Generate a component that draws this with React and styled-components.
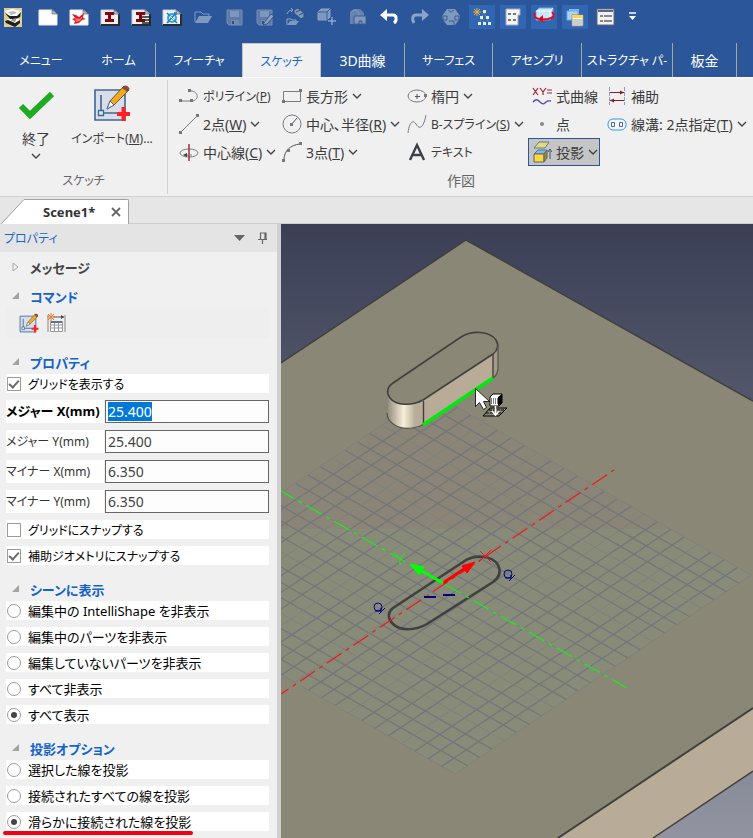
import React, { useEffect, useRef, useState } from 'react';
import styled, { createGlobalStyle, css } from 'styled-components';

const GlobalStyle = createGlobalStyle`
  * { box-sizing: border-box; }
  body {
    margin: 0;
    background: #f0f0f0;
    overflow: hidden;
  }
  body, button, input {
    font-family: 'Noto Sans', 'Noto Sans CJK JP', sans-serif;
    font-size: 13px;
    font-feature-settings: 'palt';
  }
  button {
    margin: 0;
    padding: 0;
    border: none;
    background: none;
    color: inherit;
    cursor: pointer;
  }
  svg { display: block; flex: none; }
`;

const Window = styled.div`
  min-height: 100vh;
  display: flex;
  flex-direction: column;
`;

const TitleBar = styled.header`
  background: #2b579a;
  height: 43px;
  padding-top: 5px;
  display: flex;
  gap: 5px;
`;

const QuickButton = styled.button`
  width: 26px;
  height: 24px;
  flex: none;
  display: flex;
  align-items: center;
  justify-content: center;
  background: ${({ $on }) => ($on ? '#3066b4' : 'transparent')};
  opacity: ${({ $dim }) => ($dim ? 0.46 : 1)};
  &:first-child { margin-right: 4px; }
`;

const TabBar = styled.nav`
  background: #2b579a;
  height: 34px;
  display: flex;
`;

const Tab = styled.button`
  width: ${({ $width }) => $width}px;
  flex: none;
  white-space: nowrap;
  font-size: ${({ $kana }) => ($kana ? 12 : 14)}px;
  color: #fff;
  border-right: ${({ $line }) => ($line ? '1px solid #a5a5a5' : 'none')};
  ${({ $active }) => $active && css`
    background: #f0f0f0;
    color: #1a66cc;
    border: 1px solid #c4c4c4;
    border-bottom: none;
  `}
`;

const Ribbon = styled.section`
  height: 120px;
  padding-top: 2px;
  background: #f0f0f0;
  border-top: 1px solid #fafafa;
  border-bottom: 1px solid #d2d2d2;
  display: flex;
  color: #3c3c3c;
`;

const Group = styled.div`
  display: flex;
  flex-direction: column;
  flex: ${({ $width }) => ($width ? `0 0 ${$width}px` : '1 0 auto')};
  height: 114px;
  border-right: ${({ $width }) => ($width ? '1px solid #d0d0d0' : 'none')};
`;

const GroupLabel = styled.div`
  width: ${({ $wide }) => ($wide ? '586px' : 'auto')};
  margin-top: auto;
  padding-bottom: 3px;
  line-height: 20px;
  text-align: center;
  font-size: ${({ $kana }) => ($kana ? 12 : 14)}px;
  color: #666;
`;

const BigButtons = styled.div`
  display: flex;
`;

const BigButton = styled.button`
  width: ${({ $width }) => $width}px;
  padding-top: 4px;
  display: flex;
  flex-direction: column;
  align-items: center;
  gap: 5px;
  font-size: ${({ $kana }) => ($kana ? 12 : 14)}px;
  line-height: 18px;
  white-space: nowrap;
  svg:first-child { margin-bottom: 3px; }
`;

const ToolGrid = styled.div`
  display: grid;
  grid-template-columns: 103px 125px 125px 75px max-content;
  grid-auto-rows: 28px;
  padding: 2px 0 0 7px;
`;

const Tool = styled.button`
  height: 28px;
  padding-left: 4px;
  display: flex;
  align-items: center;
  gap: 4px;
  font-size: ${({ $kana }) => ($kana ? 12 : 14)}px;
  white-space: nowrap;
  ${({ $pressed }) => $pressed && css`
    width: 72px;
    padding-left: 3px;
    background: #c5c5c5;
    border: 1px solid #2b579a;
  `}
`;

const DocTabs = styled.div`
  height: 27px;
  padding: 2px 0 0 2px;
  background: #e6e6e6;
  border-bottom: 1px solid #cfcfcf;
  display: flex;
`;

const DocTab = styled.div`
  width: 105px;
  height: 25px;
  padding: 0 7px 0 19px;
  background: #fff;
  border-top: 1px solid #a0a0a0;
  border-right: 1px solid #a0a0a0;
  border-radius: 0 2px 0 0;
  display: flex;
  align-items: center;
  justify-content: space-between;
  font-weight: 700;
  color: #333;
`;

const Workspace = styled.main`
  flex: 1;
  display: flex;
`;

const Panel = styled.aside`
  width: 281px;
  flex: none;
  background: #f0f0f0;
  border-right: 4px solid #d0d0d0;
`;

const PanelHeader = styled.div`
  height: 28px;
  padding: 0 9px 0 4px;
  background: #e4e4e4;
  display: flex;
  align-items: center;
  gap: 12px;
  color: #1a66cc;
`;

const PanelTitle = styled.span`
  flex: 1;
  font-size: 12px;
`;

const PanelBody = styled.div`
  padding: 3px 8px 0 6px;
`;

const Heading = styled.h2`
  height: 24px;
  margin: ${({ $gap }) => $gap}px 0 0;
  padding-left: 6px;
  display: flex;
  align-items: center;
  gap: 10px;
  font-size: 13px;
  font-weight: 700;
  color: ${({ $plain }) => ($plain ? '#444' : '#1463c9')};
`;

const CommandStrip = styled.div`
  height: 30px;
  padding-left: 13px;
  background: #eee;
  display: flex;
  align-items: center;
  gap: 7px;
`;

const Stack = styled.div`
  display: flex;
  flex-direction: column;
  gap: 7px;
`;

const Choice = styled.label`
  height: 19px;
  padding-left: 1px;
  background: #fff;
  display: flex;
  align-items: center;
  gap: 7px;
  font-size: ${({ $kana }) => ($kana ? 12 : 13)}px;
  white-space: nowrap;
  color: #000;
`;

const Check = styled.input`
  appearance: none;
  width: 14px;
  height: 14px;
  margin: 0;
  flex: none;
  border: 1px solid #9b9b9b;
  background: #fff;
  display: grid;
  place-items: center;
  &:checked::after {
    content: '';
    width: 4px;
    height: 8px;
    margin-bottom: 2px;
    border: solid #6a6a6a;
    border-width: 0 2px 2px 0;
    transform: rotate(42deg);
  }
`;

const Radio = styled(Check)`
  border-radius: 50%;
  &:checked::after {
    width: 6px;
    height: 6px;
    margin: 0;
    border: none;
    border-radius: 50%;
    background: #444;
    transform: none;
  }
`;

const Field = styled.label`
  height: 23px;
  display: flex;
  gap: 1px;
  font-size: ${({ $bold }) => ($bold ? 13 : 12)}px;
  font-weight: ${({ $bold }) => ($bold ? 700 : 400)};
  color: ${({ $bold }) => ($bold ? '#000' : '#333')};
`;

const FieldName = styled.span`
  width: 98px;
  background: #fff;
  line-height: 23px;
  white-space: nowrap;
`;

const FieldInput = styled.input`
  flex: 1;
  min-width: 0;
  padding: 0 2px;
  border: 1px solid #666;
  border-radius: 0;
  background: #fdfdfd;
  font-size: 14px;
  color: #444;
  outline: none;
  &::selection { background: #0078d7; color: #fff; }
`;

const Marker = styled.div`
  width: 190px;
  height: 4px;
  margin-left: -3px;
  border-radius: 2px;
  background: #f40010;
`;

const Viewport = styled.div`
  flex: 1;
  min-width: 0;
  position: relative;
  overflow: hidden;
  background: #8a8776;
`;

const SceneSvg = styled.svg`
  position: absolute;
  inset: 0;
  width: 100%;
  height: 100%;
`;

const Icon = ({ w = 20, h = 20, children }) => (
  <svg width={w} height={h} viewBox={`0 0 ${w} ${h}`} fill="none" aria-hidden="true">{children}</svg>
);

const Chevron = () => (
  <Icon w={10} h={6}><path d="M1 1l4 4 4-4" stroke="#444" strokeWidth="1.4" /></Icon>
);

const Page = ({ dark, children }) => (
  <Icon w={20} h={18}>
    <path d="M1 2h13l5 4v11H1z" fill={dark ? '#eef0f2' : '#fff'} stroke={dark ? '#c9cdd4' : '#e8ecf2'} />
    {dark && <path d="M1 17h18V6" stroke="#2b2b30" strokeWidth="2" />}
    <path d="M14 2v4h5z" fill="#bcc6d4" stroke="#555" strokeWidth=".6" />
    {children}
  </Icon>
);

const floppy = (
  <>
    <path d="M2 2h15v15H4l-2-2z" fill="#9aa7b8" stroke="#c9d0da" />
    <path d="M5 3h9v6H5z" fill="#dde3ea" />
    <path d="M6 12h8v5H6z" fill="#c2cad4" />
    <path d="M7 13h2v3H7z" fill="#445" />
  </>
);

const quickItems = [
  { name: 'アプリケーション', icon: (
    <Icon w={18} h={19}>
      <path d="M0 0h18v19H0z" fill="#d9cf96" />
      <path d="M1 3l7-2 9 2v3l-4 4 4 3-6 5-9-5 4-3z" fill="#fff" />
      <path d="M1 5l5 3h7l4-4-1 5-4 2H6z" fill="#1f1f1c" />
      <path d="M1 13l3-1 7 3 5-3v3l-5 4-9-4z" fill="#1f1f1c" />
      <path d="M4 4l6-1 3 2-6 2z" fill="#bbb" /><path d="M8 11l5-1-2 4-4-1z" fill="#999" />
    </Icon>
  ) },
  { name: '新規', icon: <Page /> },
  { name: '新規シーン', icon: (
    <Page>
      <path d="M3 6l4 1 3 2 5-4-1 5 3 1-4 1-3 3-5 1 1-3-3-2 3-1z" fill="#d8202b" />
      <path d="M6 10l4 1 4-3-3 5-4 1z" fill="#ff6b70" />
    </Page>
  ) },
  { name: '新規図面', icon: <Page dark><path d="M5 4h9v3h-3v4h3v3H5v-3h3V7H5z" fill="#8b0009" /></Page> },
  { name: '図面一覧', icon: (
    <Page dark>
      <path d="M5 4h9v3h-3v4h3v3H5v-3h3V7H5z" fill="#8b0009" />
      <path d="M11 9h9M9 12h10M11 15h9" stroke="#222" strokeWidth="1.4" />
    </Page>
  ) },
  { name: '新規CAXA', icon: (
    <Page dark>
      <circle cx="10" cy="10" r="4" stroke="#35a7e0" strokeWidth="2" />
      <path d="M5 5l10 10M14 5l-9 10M12 5h2v2M6 15v-2" stroke="#1c7fc2" strokeWidth="1.5" />
      <path d="M8 8l4 4" stroke="#d9f2ff" />
    </Page>
  ) },
  { name: '開く', dim: true, icon: (
    <Icon w={20} h={18}>
      <path d="M2 14V4h6l2 2h6v3" stroke="#dfe6ef" /><path d="M2 15l4-7h13l-4 7z" fill="#dfe6ef" />
    </Icon>
  ) },
  { name: '保存', dim: true, icon: <Icon w={19} h={19}>{floppy}</Icon> },
  { name: '名前を付けて保存', dim: true, icon: (
    <Icon w={20} h={19}>{floppy}<path d="M9 15l7-9 3 2-7 8-4 1z" fill="#fff" stroke="#456" /></Icon>
  ) },
  { name: 'カタログから開く', dim: true, icon: (
    <Icon w={22} h={20}>
      <path d="M2 7c1-3 3-4 6-4M6 1l2 2-2 2" stroke="#fff" />
      <path d="M9 3l4-2 6 5v4l-3 2-7-6z" fill="#e3e8ef" stroke="#345" />
      <path d="M11 5l4-2M14 8l4-2" stroke="#345" />
      <path d="M2 18v-6h4l1 1h4v2" stroke="#fff" /><path d="M2 18l3-4h9l-3 4z" fill="#dfe6ef" />
    </Icon>
  ) },
  { name: 'パーツ挿入', dim: true, icon: (
    <Icon w={20} h={20}>
      <path d="M1 5l3-3h9v8l-3 3H1z" fill="#dfe6ef" stroke="#fff" /><path d="M1 5h9v8M10 5l3-3" stroke="#567" />
      <path d="M15 10v8M11 14h8" stroke="#fff" strokeWidth="1.5" />
    </Icon>
  ) },
  { name: 'パッケージ', dim: true, icon: (
    <Icon w={20} h={20}>
      <path d="M2 17V5l4-3h6l4 4v11z" fill="#aebacb" /><path d="M3 5c5-4 8-1 8 4" stroke="#dfe6ef" />
      <path d="M6 9h12v8h-4v-3h-3v3H6z" fill="#dfe6ef" stroke="#567" />
    </Icon>
  ) },
  { name: '元に戻す', icon: (
    <Icon w={20} h={18}>
      <path d="M3 7h11c4 0 4 6 1 8" stroke="#fff" strokeWidth="3" /><path d="M8 1L1 7l7 6z" fill="#fff" />
    </Icon>
  ) },
  { name: 'やり直し', dim: true, icon: (
    <Icon w={20} h={18}>
      <path d="M17 7H6C2 7 2 12 4 15" stroke="#fff" strokeWidth="3" /><path d="M12 1l7 6-7 6z" fill="#fff" />
    </Icon>
  ) },
  { name: '表示', dim: true, icon: (
    <Icon w={20} h={20}>
      <path d="M6 2h8l5 7-1 4-4 5H6l-4-5-1-4z" fill="#dfe6ef" />
      <path d="M6 9H2v4h4zM14 9h4v4h-4zM7 3l3 2 3-2M8 14h5v4" stroke="#567" />
    </Icon>
  ) },
  { name: 'シーンツリー', on: true, icon: (
    <Icon w={20} h={20}>
      <path d="M5 1v8M1 5h8M2 2l6 6M8 2L2 8" stroke="#f3b431" />
      <path d="M12 4l-2 6-2 6M12 4l2 6 3 6M10 10l2 6" stroke="#70a7d8" strokeDasharray="1 1" />
      <path d="M11 3h3v3h-3zM8 9h3v3H8zM14 9h3v3h-3zM6 15h3v3H6zM11 15h3v3h-3zM16 15h3v3h-3z" fill="#e6f3d2" />
    </Icon>
  ) },
  { name: 'プロパティブラウザ', on: true, icon: (
    <Icon w={18} h={18}>
      <path d="M2 1h14v6h-2v10H2z" fill="#f5f5f5" stroke="#aaa" />
      <path d="M4 6h3M9 6h3M4 12h3M9 12h3" stroke="#777" strokeWidth="2" />
    </Icon>
  ) },
  { name: '回転', on: true, icon: (
    <Icon w={22} h={20}>
      <path d="M3 4l3-3h14v9l-3 3H3z" fill="#c9e6fa" stroke="#6aa8d8" /><path d="M3 4h14v9M17 4l3-3" stroke="#eef9ff" />
      <path d="M2 6c-3 6 6 7 13 6 6-1 7-4 4-7" stroke="#e30a1c" strokeWidth="2" /><path d="M10 8l-5 4 5 4z" fill="#e30a1c" />
    </Icon>
  ) },
  { name: 'カタログ', on: true, icon: (
    <Icon w={20} h={20}>
      <path d="M4 2h10v9H4z" fill="#87bce8" /><path d="M2 4h11v9H2z" fill="#a9d3f3" stroke="#74a9d5" />
      <path d="M7 8h11v11H7z" fill="#fff" stroke="#888" /><path d="M7 8h11v3H7z" fill="#ffd447" />
      <path d="M8 13h9M8 15h9M8 17h9" stroke="#999" />
    </Icon>
  ) },
  { name: 'オプション', icon: (
    <Icon w={20} h={18}>
      <path d="M1 1h17v16H1z" fill="#f2f2f2" stroke="#667" /><path d="M2 3h15" stroke="#536a8b" strokeWidth="2" />
      <path d="M4 8h3M4 13h3M8 8h8M8 13h8" stroke="#666" strokeWidth="1.5" />
    </Icon>
  ) },
  { name: 'カスタマイズ', icon: <Icon w={20} h={10}><path d="M2 1h7" stroke="#fff" strokeWidth="1.5" /><path d="M2 4h7L5.500 8z" fill="#fff" /></Icon> },
];

const tabs = [
  { label: 'メニュー', width: 82, kana: true },
  { label: 'ホーム', width: 74, kana: true, line: true },
  { label: 'フィーチャ', width: 86, kana: true },
  { label: 'スケッチ', width: 79, kana: true, active: true },
  { label: '3D曲線', width: 84, line: true },
  { label: 'サーフェス', width: 88, kana: true, line: true },
  { label: 'アセンブリ', width: 89, kana: true, line: true },
  { label: 'ストラクチャ パ-', width: 91, kana: true, line: true },
  { label: '板金', width: 64, line: true },
];

const SketchIcon = ({ size }) => (
  <svg width={size} height={size} viewBox="0 0 38 38" fill="none" aria-hidden="true">
    <path d="M2 6h30v30H2z" fill="#d9dde7" stroke="#3e6796" strokeWidth="1.600" />
    <path d="M8 11v18h20" stroke="#3e6796" strokeWidth="1.600" />
    <path d="M5.500 26.500h5v5h-5z" fill="#d9eafa" stroke="#3e6796" strokeWidth="1.300" />
    <path d="M14 25l3-8 14-15 5 4-15 15z" fill="#f8aa12" stroke="#5b5b58" />
    <path d="M14 25l3-8 4 4z" fill="#fff" stroke="#496583" />
    <path d="M29 4l2-2c2-2 7 2 5 4l-2 2z" fill="#8f4b3a" />
    <path d="M30.500 23v14M24 30h13" stroke="#f22" strokeWidth="4" />
  </svg>
);

const line = { stroke: '#777b82', strokeWidth: 1 };
const Dot = ({ x, y }) => <path d={`M${x - 1} ${y - 1}h3v3h-3z`} fill="#777" />;

const toolRows = [
  [
    { label: 'ポリライン', accel: 'P', kana: true, icon: <Icon><path d="M1 15h12c8-1 6-10-1-10" {...line} /><Dot x={1} y={14} /><Dot x={12} y={14} /><Dot x={10} y={4} /></Icon> },
    { label: '長方形', menu: true, icon: <Icon><path d="M1.500 5.500h17v10h-17z" {...line} /><Dot x={1} y={15} /><Dot x={18} y={4} /></Icon> },
    { label: '楕円', menu: true, icon: <Icon><ellipse cx="10" cy="10" rx="9" ry="6" {...line} /><path d="M10 8v5M8 10.500h5" stroke="#555" /><Dot x={18} y={9} /></Icon> },
    { label: '式曲線', icon: (
      <Icon>
        <path d="M1 2l5 7M6 2l-5 7M8 2l3 4 3-4M11 6v3M15 4h5M15 7h5" stroke="#a52538" strokeWidth="1.200" />
        <path d="M1 16c3-3 4-3 7 0s4 2 6 0 3-1 5-1" stroke="#5546c4" strokeWidth="1.300" />
      </Icon>
    ) },
    { label: '補助', icon: (
      <Icon>
        <path d="M2.500 1v18M17.500 1v18" stroke="#8a9cc8" strokeDasharray="4 1" />
        <path d="M3 6.500h14M3 14.500h14" stroke="#7d1e28" /><path d="M17 6.500l-4-2v4zM3 14.500l4-2v4z" fill="#8a1a22" />
      </Icon>
    ) },
  ],
  [
    { label: '2点', accel: 'W', menu: true, icon: <Icon><path d="M2 18L18 2" {...line} /><Dot x={1} y={18} /><Dot x={18} y={1} /></Icon> },
    { label: '中心、半径', accel: 'R', menu: true, icon: <Icon><circle cx="10" cy="10" r="9" {...line} /><path d="M9 11l6-7" stroke="#555" /><Dot x={9} y={10} /></Icon> },
    { label: 'B-スプライン', accel: 'S', menu: true, kana: true, icon: <Icon><path d="M1 19c1-10 5-14 8-9s7 6 10-9" {...line} /></Icon> },
    { label: '点', icon: <Icon><circle cx="10" cy="10" r="2" fill="#888" /></Icon> },
    { label: '線溝: 2点指定', accel: 'T', menu: true, icon: (
      <Icon><rect x="1" y="5" width="18" height="11" rx="5" fill="#edf7ff" stroke="#3b96e8" /><path d="M4.500 8.500h3v4h-3zM12.500 8.500h3v4h-3z" stroke="#666" /></Icon>
    ) },
  ],
  [
    { label: '中心線', accel: 'C', menu: true, icon: <Icon><ellipse cx="10" cy="11" rx="9" ry="4" {...line} /><path d="M10 2v17" stroke="#a2313c" strokeWidth="1.500" /><path d="M5 13h8" {...line} /><path d="M8 11l-4 2 4 2z" fill="#444" /></Icon> },
    { label: '3点', accel: 'T', menu: true, icon: <Icon><path d="M2 18C2 9 8 3 18 2" stroke="#555" /><Dot x={1} y={18} /><Dot x={6} y={8} /><Dot x={18} y={1} /></Icon> },
    { label: 'テキスト', kana: true, icon: <Icon><path d="M3 18L10 3l7 15M5.500 13h9" stroke="#3a414b" strokeWidth="2.400" /></Icon> },
    { label: '投影', menu: true, pressed: true, icon: (
      <Icon w={20} h={22}>
        <path d="M2 7l5-6h10l-4 6z" fill="#e2dc7c" stroke="#5b7c95" /><path d="M2 13l4-4h9l-3 4z" fill="#88b8e4" stroke="#4f7391" />
        <path d="M2 13h10v8H2z" fill="#ffd83c" stroke="#5b6870" /><path d="M12 13l3-4v8l-3 4z" fill="#a6872e" stroke="#5b6870" />
        <path d="M18 18V9M16 11l2-3 2 3" stroke="#375a83" />
      </Icon>
    ) },
  ],
];

const commandIcons = [
  { name: 'インポート', icon: <SketchIcon size={20} /> },
  { name: 'パラメータ表', icon: (
    <Icon>
      <path d="M2 2v17M19 2v17" stroke="#888" /><path d="M7 4h11" stroke="#555" /><path d="M18 4l-3-2v4z" fill="#444" />
      <path d="M4.500 8.500h12v10h-12zM4.500 12h12M4.500 15h12M8.500 9v9M12.500 9v9" fill="#fff" stroke="#999" />
      <path d="M5 8h11v2H5z" fill="#63728a" />
      <path d="M5 0v8M1 4h8M2 1l6 6M8 1L2 7" stroke="#e9792a" />
    </Icon>
  ) },
];

const fields = [
  { label: 'メジャー X(mm)', value: '25.400' },
  { label: 'メジャー Y(mm)', value: '25.400' },
  { label: 'マイナー X(mm)', value: '6.350' },
  { label: 'マイナー Y(mm)', value: '6.350' },
];

const sceneOptions = [
  '編集中の IntelliShape を非表示',
  '編集中のパーツを非表示',
  '編集していないパーツを非表示',
  'すべて非表示',
  'すべて表示',
];

const projectionOptions = [
  '選択した線を投影',
  '接続されたすべての線を投影',
  '滑らかに接続された線を投影',
];

function Section({ title, gap, plain, children }) {
  return (
    <>
      <Heading $gap={gap} $plain={plain}>
        <Icon w={8} h={10}>
          {plain
            ? <path d="M1 1v8l5-4z" stroke="#aaa" />
            : <path d="M0 8h7V1z" fill="#a3a3a3" />}
        </Icon>
        {title}
      </Heading>
      {children}
    </>
  );
}

function RadioGroup({ name, options, initial }) {
  const [value, setValue] = useState(initial);
  return (
    <Stack role="radiogroup">
      {options.map((option) => (
        <Choice key={option}>
          <Radio type="radio" name={name} checked={value === option} onChange={() => setValue(option)} />
          {option}
        </Choice>
      ))}
    </Stack>
  );
}

// Sketch plane: the near corner and its two edge vectors, 24 cells each way
const CELLS = 24;
const corner = { x: 455, y: 774 };
const edgeU = { x: 296, y: -199 };
const edgeV = { x: -320, y: -183 };

const planePoint = (u, v) => [
  corner.x + edgeU.x * u + edgeV.x * v,
  corner.y + edgeU.y * u + edgeV.y * v,
];

const gridLines = Array.from({ length: CELLS + 1 }, (_, i) => {
  const t = i / CELLS;
  return {
    major: i % 4 === 0,
    d: `M${planePoint(t, 0)}L${planePoint(t, 1)}M${planePoint(0, t)}L${planePoint(1, t)}`,
  };
});

const planeOutline = [planePoint(0, 0), planePoint(1, 0), planePoint(1, 1), planePoint(0, 1)].join(' ');

function Scene() {
  return (
    <SceneSvg viewBox="281 224 472 614" preserveAspectRatio="xMinYMin slice" fill="none">
      <defs>
        <linearGradient id="sky" x1="0" y1="0" x2="0" y2="1">
          <stop offset="0" stopColor="#3a3f56" />
          <stop offset="1" stopColor="#9194a0" />
        </linearGradient>
        <linearGradient id="round" x1="387" y1="0" x2="424" y2="0" gradientUnits="userSpaceOnUse">
          <stop offset="0" stopColor="#8f8878" />
          <stop offset=".45" stopColor="#f7efd9" />
          <stop offset=".75" stopColor="#b9ae99" />
          <stop offset="1" stopColor="#b8ab97" />
        </linearGradient>
        <clipPath id="nearHalf"><path d="M281 529h472v309H281z" /></clipPath>
      </defs>
      <path d="M281 224h472v614H281z" fill="url(#sky)" />
      <path d="M281 363L466 240L753 401V708L558 838H281z" fill="#8a8776" />
      <path d="M558 838L753 708V771L653 838z" fill="#b8ab97" />
      <path d="M281 363L466 240L753 401M653 838L753 771" stroke="#404040" strokeWidth="1.500" />
      <path d="M558 838L753 708" stroke="#404040" strokeWidth="2" />

      <polygon points={planeOutline} fill="#8a8576" />
      <polygon points={planeOutline} fill="#888b78" clipPath="url(#nearHalf)" />
      {gridLines.map(({ major, d }) => (
        <path key={d} d={d} stroke={major ? '#7f807d' : '#74767c'} strokeWidth={major ? 1 : 1.3} />
      ))}

      <path d="M388 391v25c0 8 12 14 24 12 5 0 8-1 12-4v-24z" fill="url(#round)" />
      <path d="M423 400L493 354V378L424 425z" fill="#b8ab97" />
      <path d="M493 354l5-9v24l-5 9z" fill="#a59a88" />
      <path d="M393 383L461 337C472 330 490 331 496 340C499 345 498 350 493 354L423 400C412 406 396 406 390 398C386 393 387 387 393 383z" fill="#8a8776" stroke="#404040" strokeWidth="1.600" />
      <path d="M387 413c0 10 12 17 25 15 5-1 8-1 12-4M498 345v23c0 5-2 8-5 10" stroke="#55534d" strokeWidth="1.200" />
      <path d="M423.500 401v23M493 354v24" stroke="#404040" strokeWidth="1.400" />
      <path d="M423 425L493 378" stroke="#00e80c" strokeWidth="3.500" />

      <path d="M393 608L463 562C474 554 492 555 498 565C501 571 500 577 493 582L427 624C415 631 400 631 393 624C387 618 388 612 393 608z" stroke="#404040" strokeWidth="2.600" />
      <path d="M281 694L614 470" stroke="#f01818" strokeWidth="1.200" strokeDasharray="18 5 4 5" strokeDashoffset="9" />
      <path d="M281 491L627 688" stroke="#18f018" strokeWidth="1.200" strokeDasharray="18 5 4 5" strokeDashoffset="3" />
      <path d="M443 583L467 567" stroke="#f00" strokeWidth="3" />
      <path d="M475 562l-8 11-5-7z" fill="#f00" stroke="#f00" />
      <path d="M443 583L420 570" stroke="#0f0" strokeWidth="3" />
      <path d="M410 564l14 3-5 8z" fill="#0f0" stroke="#0f0" />
      <path d="M480 551l11 11M491 550l-12 12" stroke="#f01818" />
      <path d="M395 553l5 6 5-6M400 559v6" stroke="#18f018" />
      <g stroke="#000080">
        <path d="M424 597h12M443 595h12" strokeWidth="2" />
        <circle cx="378" cy="607" r="4" /><path d="M375 611h6M379 614l6-6M381 608v4" />
        <circle cx="508" cy="574" r="4" /><path d="M505 578h6M509 581l6-6M511 575v4" />
      </g>

      <path d="M475.500 388.500v18l4-4 4 7 3-2-3-6h6z" fill="#fff" stroke="#000" strokeWidth=".8" />
      <path d="M490 397l3-3h9v9l-3 3h-9z" fill="#fff" stroke="#000" />
      <path d="M498 397l4-3v9l-4 3z" fill="#000" />
      <path d="M491 399h7M491 401h7M491 403h7" stroke="#000" strokeDasharray="1 1" />
      <path d="M483 416l7-8h17l-8 8z" fill="#8a8776" stroke="#000" />
      <path d="M486 413h16M489 410h16" stroke="#000" strokeDasharray="3 1" />
      <path d="M495.500 406v8M492 411l3.500 4 3.500-4" stroke="#fff" strokeWidth="1.500" />
    </SceneSvg>
  );
}

export default function App() {
  const [values, setValues] = useState(fields.map((f) => f.value));
  const [showGrid, setShowGrid] = useState(true);
  const [snapGrid, setSnapGrid] = useState(false);
  const [snapGeometry, setSnapGeometry] = useState(true);
  const firstField = useRef(null);

  useEffect(() => {
    firstField.current.focus();
    firstField.current.select();
  }, []);

  const setField = (index, value) => {
    setValues(values.map((v, i) => (i === index ? value : v)));
  };

  return (
    <Window>
      <GlobalStyle />
      <TitleBar>
        {quickItems.map(({ name, icon, on, dim }) => (
          <QuickButton key={name} aria-label={name} $on={on} $dim={dim}>{icon}</QuickButton>
        ))}
      </TitleBar>
      <TabBar>
        {tabs.map((t) => (
          <Tab key={t.label} $width={t.width} $line={t.line} $kana={t.kana} $active={t.active}>{t.label}</Tab>
        ))}
      </TabBar>

      <Ribbon>
        <Group $width={168}>
          <BigButtons>
            <BigButton $width={72}>
              <Icon w={36} h={38}><path d="M3 22l9 9L34 10" stroke="#1eab22" strokeWidth="6" /></Icon>
              終了
              <Chevron />
            </BigButton>
            <BigButton $width={80} $kana>
              <SketchIcon size={38} />
              <span>インポート(<u>M</u>)...</span>
            </BigButton>
          </BigButtons>
          <GroupLabel $kana>スケッチ</GroupLabel>
        </Group>
        <Group>
          <ToolGrid>
            {toolRows.flat().map(({ label, accel, menu, kana, pressed, icon }) => (
              <Tool key={label} $kana={kana} $pressed={pressed}>
                {icon}
                <span>{label}{accel && <>(<u>{accel}</u>)</>}</span>
                {menu && <Chevron />}
              </Tool>
            ))}
          </ToolGrid>
          <GroupLabel $wide>作図</GroupLabel>
        </Group>
      </Ribbon>

      <DocTabs>
        <Icon w={22} h={25}><path d="M0 25L22 0v25z" fill="#fff" /><path d="M0 24L22 .5" stroke="#a0a0a0" /></Icon>
        <DocTab>
          Scene1*
          <button aria-label="閉じる"><Icon w={10} h={10}><path d="M1 1l8 8M9 1L1 9" stroke="#666" strokeWidth="1.800" /></Icon></button>
        </DocTab>
      </DocTabs>

      <Workspace>
        <Panel>
          <PanelHeader>
            <PanelTitle>プロパティ</PanelTitle>
            <button aria-label="メニュー"><Icon w={12} h={6}><path d="M0 0h11L5.500 6z" fill="#666" /></Icon></button>
            <button aria-label="固定"><Icon w={10} h={12}><path d="M2 1h6v6M2.500 1v6M7 1v6M0 7.500h9M4.500 8v4" stroke="#666" strokeWidth="1.200" /></Icon></button>
          </PanelHeader>
          <PanelBody>
            <Section title="メッセージ" gap={0} plain />
            <Section title="コマンド" gap={5}>
              <CommandStrip>
                {commandIcons.map(({ name, icon }) => <button key={name} aria-label={name}>{icon}</button>)}
              </CommandStrip>
            </Section>
            <Section title="プロパティ" gap={12}>
              <Stack>
                <Choice $kana>
                  <Check type="checkbox" checked={showGrid} onChange={(e) => setShowGrid(e.target.checked)} />
                  グリッドを表示する
                </Choice>
                {fields.map((f, i) => (
                  <Field key={f.label} $bold={i === 0}>
                    <FieldName>{f.label}</FieldName>
                    <FieldInput
                      type="text"
                      ref={i === 0 ? firstField : null}
                      value={values[i]}
                      onChange={(e) => setField(i, e.target.value)}
                    />
                  </Field>
                ))}
                <Choice $kana>
                  <Check type="checkbox" checked={snapGrid} onChange={(e) => setSnapGrid(e.target.checked)} />
                  グリッドにスナップする
                </Choice>
                <Choice $kana>
                  <Check type="checkbox" checked={snapGeometry} onChange={(e) => setSnapGeometry(e.target.checked)} />
                  補助ジオメトリにスナップする
                </Choice>
              </Stack>
            </Section>
            <Section title="シーンに表示" gap={12}>
              <RadioGroup name="scene" options={sceneOptions} initial="すべて表示" />
            </Section>
            <Section title="投影オプション" gap={12}>
              <RadioGroup name="projection" options={projectionOptions} initial="滑らかに接続された線を投影" />
            </Section>
            <Marker />
          </PanelBody>
        </Panel>
        <Viewport><Scene /></Viewport>
      </Workspace>
    </Window>
  );
}
